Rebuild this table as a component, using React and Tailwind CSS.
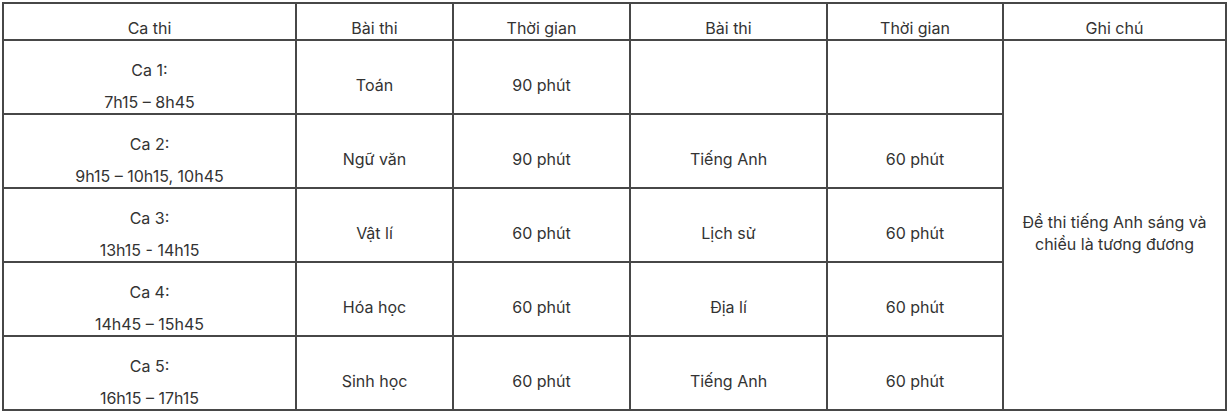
import React from 'react';

const rows = [
    { ca: 'Ca 1:', gio: '7h15 – 8h45', bai1: 'Toán', tg1: '90 phút', bai2: '', tg2: '' },
    { ca: 'Ca 2:', gio: '9h15 – 10h15, 10h45', bai1: 'Ngữ văn', tg1: '90 phút', bai2: 'Tiếng Anh', tg2: '60 phút' },
    { ca: 'Ca 3:', gio: '13h15 - 14h15', bai1: 'Vật lí', tg1: '60 phút', bai2: 'Lịch sử', tg2: '60 phút' },
    { ca: 'Ca 4:', gio: '14h45 – 15h45', bai1: 'Hóa học', tg1: '60 phút', bai2: 'Địa lí', tg2: '60 phút' },
    { ca: 'Ca 5:', gio: '16h15 – 17h15', bai1: 'Sinh học', tg1: '60 phút', bai2: 'Tiếng Anh', tg2: '60 phút' },
];

const cell = "border-2 border-[#474747] p-0 text-center align-top";

const Plain = ({ children }) => (
    <td className={cell}>
        <div className="pt-[34px] leading-5">{children}</div>
    </td>
);

export default function App() {
    return (
        <div className="bg-white w-[1228px] h-[412px] pt-[2px] pl-[2px] text-[16px] text-[#333] font-['Inter','Noto_Sans',sans-serif]">
            <table className="table-fixed border-collapse w-[1225px]">
                <colgroup>
                    <col className="w-[293px]" />
                    <col className="w-[157px]" />
                    <col className="w-[177px]" />
                    <col className="w-[197px]" />
                    <col className="w-[176px]" />
                    <col />
                </colgroup>
                <thead>
                    <tr className="h-[37px]">
                        {['Ca thi', 'Bài thi', 'Thời gian', 'Bài thi', 'Thời gian', 'Ghi chú'].map((h, i) => (
                            <th key={i} className="border-2 border-[#474747] p-0 pb-[1px] font-normal text-center align-bottom leading-5">
                                {h}
                            </th>
                        ))}
                    </tr>
                </thead>
                <tbody>
                    {rows.map((r, i) => (
                        <tr key={i} className="h-[74px]">
                            <td className={cell}>
                                <div className="flex flex-col pt-[19px] gap-[12px] leading-5">
                                    <p>{r.ca}</p>
                                    <p>{r.gio}</p>
                                </div>
                            </td>
                            <Plain>{r.bai1}</Plain>
                            <Plain>{r.tg1}</Plain>
                            <Plain>{r.bai2}</Plain>
                            <Plain>{r.tg2}</Plain>
                            {i === 0 && (
                                <td rowSpan={5} className="border-2 border-[#474747] p-0 pt-[16px] text-center align-middle leading-[22px]">
                                    Đề thi tiếng Anh sáng và
                                    <br />
                                    chiều là tương đương
                                </td>
                            )}
                        </tr>
                    ))}
                </tbody>
            </table>
        </div>
    );
}
